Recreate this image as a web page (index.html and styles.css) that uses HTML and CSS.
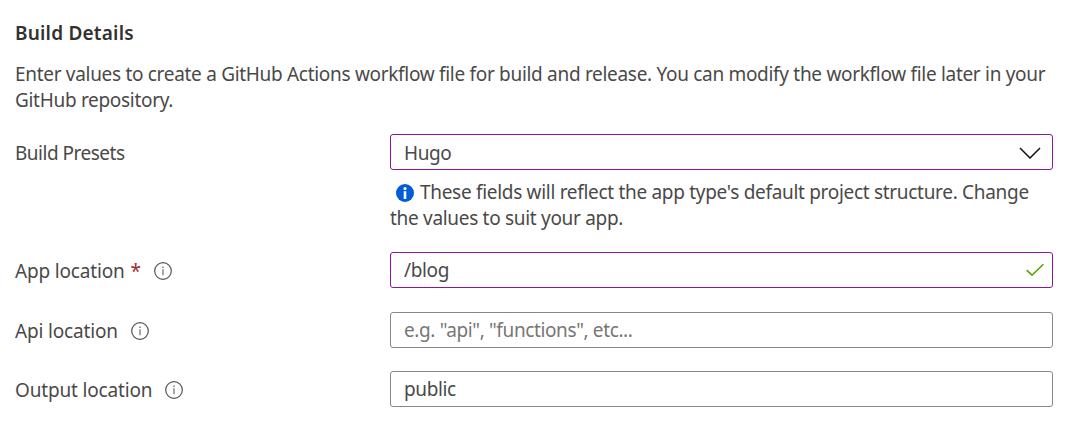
FILE: index.html
```html
<!DOCTYPE html>
<html lang="en">
<head>
<meta charset="utf-8">
<title>Build Details</title>
<link rel="stylesheet" href="styles.css">
</head>
<body>
<svg class="defs" width="0" height="0">
  <symbol id="info" viewBox="0 0 18 18">
    <circle cx="9" cy="9" r="8.3" fill="none" stroke="#555" stroke-width="1.2"/>
    <path d="M9 7.2v6" stroke="#777" stroke-width="1.3"/>
    <path d="M9 4.5v1.6" stroke="#777" stroke-width="1.4"/>
  </symbol>
</svg>
<main class="form">
  <h1 class="title">Build Details</h1>
  <p class="intro">Enter values to create a GitHub Actions workflow file for build and release. You can modify the workflow file later in your<br>GitHub repository.</p>

  <div class="row row-preset">
    <div class="label label-preset">Build Presets</div>
    <div class="control">
      <div class="field select active"><span>Hugo</span>
        <svg class="chevron" width="22" height="12" viewBox="0 0 22 12"><path d="M1 1l10 10L21 1" fill="none" stroke="#111" stroke-width="1.5"/></svg>
      </div>
      <p class="hint"><svg class="hint-icon" width="18" height="18" viewBox="0 0 18 18"><circle cx="9" cy="9" r="9" fill="#015cda"/><circle cx="9" cy="4.6" r="1.6" fill="#fff"/><path d="M7.7 7.2h2.6V15H7.7z" fill="#fff"/></svg>These fields will reflect the app type's default project structure. Change<br>the values to suit your app.</p>
    </div>
  </div>

  <div class="row row-app">
    <label class="label" for="app">App location<span class="required">*</span><svg class="info" width="18" height="18"><use href="#info"/></svg></label>
    <div class="field active"><input id="app" class="input" value="/blog">
      <svg class="check" width="18" height="14" viewBox="0 0 18 14"><path d="M.7 7.2l5.3 5L17.3 1.2" fill="none" stroke="#57a300" stroke-width="1.6"/></svg>
    </div>
  </div>

  <div class="row row-api">
    <label class="label" for="api">Api location<svg class="info" width="18" height="18"><use href="#info"/></svg></label>
    <div class="field"><input id="api" class="input" placeholder="e.g. &quot;api&quot;, &quot;functions&quot;, etc..."></div>
  </div>

  <div class="row">
    <label class="label" for="output">Output location<svg class="info" width="18" height="18"><use href="#info"/></svg></label>
    <div class="field"><input id="output" class="input" value="public"></div>
  </div>
</main>
</body>
</html>
```
FILE: styles.css
```css
* { box-sizing: border-box; }
body {
  margin: 0;
  background: #fff;
  color: #4a4948;
  font: 19px/26px "Segoe UI", "Noto Sans", sans-serif;
  letter-spacing: -0.305px;
}
.defs { position: absolute; }
.form { padding: 20px 22px 0 15px; }
.title {
  margin: 0;
  color: #323130;
  font-size: 19px;
  line-height: 26px;
  font-weight: 600;
  letter-spacing: 0.2px;
}
.intro { margin: 15px 0 0; white-space: nowrap; }
.row {
  display: grid;
  grid-template-columns: 375px 663px;
  margin-top: 23px;
}
.row-preset { margin-top: 21px; }
.row-app { margin-top: 21px; }
.row-api { margin-top: 24px; }
.label {
  display: flex;
  align-items: center;
  height: 36px;
  padding-top: 2px;
  letter-spacing: -0.17px;
}
.row-api .label { padding-top: 1px; }
.label-preset { letter-spacing: -0.5px; }
.required {
  margin-left: 6px;
  color: #a4262c;
}
.info { margin-left: 13px; }
.field {
  display: flex;
  align-items: center;
  justify-content: space-between;
  height: 36px;
  padding: 0 12px 0 13px;
  border: 1px solid #8a8886;
  border-radius: 3px;
  letter-spacing: -0.38px;
}
.select { padding: 2px 11px 0 13px; }
.active { border-color: #881798; }
.check { margin-right: -4px; }
.input {
  flex: 1;
  min-width: 0;
  padding: 0;
  border: 0;
  outline: 0;
  background: none;
  color: inherit;
  font: inherit;
  letter-spacing: inherit;
}
.input::placeholder { color: #787674; opacity: 1; }
.hint { margin: 9px 0 0; white-space: nowrap; }
.hint-icon {
  margin: 0 6px 0 6px;
  vertical-align: -3px;
}
```
